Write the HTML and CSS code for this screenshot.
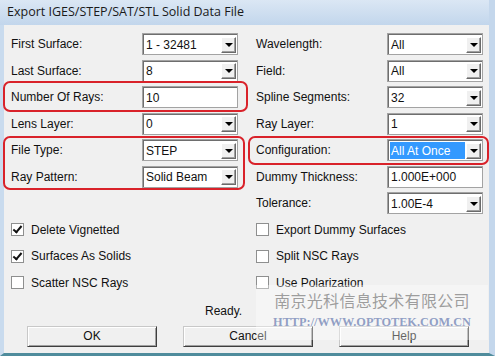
FILE: index.html
```html
<!DOCTYPE html>
<html lang="en">
<head>
    <meta charset="UTF-8">
    <title>Export IGES/STEP/SAT/STL Solid Data File</title>
    <link rel="stylesheet" href="styles.css">
</head>
<body>
    <div class="window">
        <div class="titlebar">Export IGES/STEP/SAT/STL Solid Data File</div>
        <div class="client">
            <div class="form">
                <label class="lbl">First Surface:</label>
                <div class="combo"><span class="val">1 - 32481</span><span class="drop"></span></div>
                <label class="lbl">Wavelength:</label>
                <div class="combo"><span class="val">All</span><span class="drop"></span></div>

                <label class="lbl">Last Surface:</label>
                <div class="combo"><span class="val">8</span><span class="drop"></span></div>
                <label class="lbl">Field:</label>
                <div class="combo"><span class="val">All</span><span class="drop"></span></div>

                <label class="lbl">Number Of Rays:</label>
                <div class="edit">10</div>
                <label class="lbl">Spline Segments:</label>
                <div class="combo"><span class="val">32</span><span class="drop"></span></div>

                <label class="lbl">Lens Layer:</label>
                <div class="combo"><span class="val">0</span><span class="drop"></span></div>
                <label class="lbl">Ray Layer:</label>
                <div class="combo"><span class="val">1</span><span class="drop"></span></div>

                <label class="lbl">File Type:</label>
                <div class="combo"><span class="val">STEP</span><span class="drop"></span></div>
                <label class="lbl">Configuration:</label>
                <div class="combo"><span class="val selected">All At Once</span><span class="drop"></span></div>

                <label class="lbl">Ray Pattern:</label>
                <div class="combo"><span class="val">Solid Beam</span><span class="drop"></span></div>
                <label class="lbl">Dummy Thickness:</label>
                <div class="edit">1.000E+000</div>

                <div class="blank"></div>
                <label class="lbl">Tolerance:</label>
                <div class="combo"><span class="val">1.00E-4</span><span class="drop"></span></div>

                <div class="check"><span class="box checked"></span>Delete Vignetted</div>
                <div class="check"><span class="box"></span>Export Dummy Surfaces</div>
                <div class="check"><span class="box checked"></span>Surfaces As Solids</div>
                <div class="check"><span class="box"></span>Split NSC Rays</div>
                <div class="check"><span class="box"></span>Scatter NSC Rays</div>
                <div class="check"><span class="box"></span>Use Polarization</div>
            </div>

            <div class="status">Ready.</div>

            <div class="buttons">
                <button>OK</button>
                <button>Cancel</button>
                <button>Help</button>
            </div>
        </div>

        <!-- red annotation frames -->
        <div class="mark mark-rays"></div>
        <div class="mark mark-type"></div>
        <div class="mark mark-config"></div>

        <div class="watermark">
            <div class="wm-cn">南京光科信息技术有限公司</div>
            <div class="wm-url">HTTP://WWW.OPTOTEK.COM.CN</div>
        </div>
    </div>
</body>
</html>
```

FILE: styles.css
```css
body {
    margin: 0;
    font-family: "Liberation Sans", Arial, sans-serif;
    font-size: 12px;
    color: #111;
}

.window {
    position: relative;
    width: 495px;
    height: 356px;
    box-sizing: border-box;
    background-color: #c9dbee;
    border-left: 4px solid #c9dbee;
    border-right: 6px solid #c4d7ec;
    border-bottom: 3px solid #4f8c9c;
    display: flex;
    flex-direction: column;
}

.titlebar {
    height: 25px;
    margin-left: -4px;
    padding-left: 7px;
    line-height: 24px;
    font-family: "Open Sans", "Liberation Sans", sans-serif;
    font-size: 12.5px;
    color: #1a1a1a;
    background: linear-gradient(#dbe7f4, #c2d6ec);
}

.client {
    flex: 1;
    background-color: #f0f0f0;
    padding: 8px 0 0 7px;
}

.form {
    display: grid;
    grid-template-columns: 131px 114px 131px 96px;
    grid-auto-rows: 22px;
    row-gap: 4.5px;
    align-items: center;
}

.lbl {
    white-space: nowrap;
}

.combo,
.edit {
    width: 96px;
    height: 22px;
    box-sizing: border-box;
    background-color: #fff;
    border: 1px solid #a3a3a3;
    box-shadow: inset 1px 1px 0 #6e6e6e;
    display: flex;
    align-items: center;
    padding: 2px 1px 1px 2px;
}

.edit {
    padding-left: 3px;
}

.val {
    flex: 1;
    padding-left: 1px;
    line-height: 16px;
    align-self: stretch;
    display: flex;
    align-items: center;
}

.val.selected {
    background-color: #3399ff;
    color: #fff;
    margin-right: 1px;
}

.drop {
    width: 15px;
    height: 16px;
    box-sizing: border-box;
    background-color: #f0f0f0;
    border: 1px solid;
    border-color: #fff #6a6a6a #6a6a6a #fff;
    box-shadow: inset -1px -1px 0 #a0a0a0;
    position: relative;
}

.drop::after {
    content: "";
    position: absolute;
    left: 3px;
    top: 5px;
    border-left: 4px solid transparent;
    border-right: 4px solid transparent;
    border-top: 4px solid #000;
}

.blank {
    grid-column: span 2;
}

.check {
    grid-column: span 2;
    display: flex;
    align-items: center;
    gap: 7px;
}

.box {
    width: 13px;
    height: 13px;
    box-sizing: border-box;
    background-color: #fff;
    border: 1px solid #8e8f8f;
    position: relative;
}

.box.checked::after {
    content: "";
    position: absolute;
    left: 3px;
    top: 0px;
    width: 3px;
    height: 7px;
    border: solid #111;
    border-width: 0 2px 2px 0;
    transform: rotate(40deg);
}

.status {
    margin-top: 10px;
    padding-left: 194px;
    height: 14px;
    line-height: 14px;
}

.buttons {
    display: flex;
    gap: 26px;
    margin-top: 8px;
    padding-left: 16px;
}

.buttons button {
    width: 130px;
    height: 21px;
    padding: 0;
    font-family: "Liberation Sans", Arial, sans-serif;
    font-size: 12px;
    color: #111;
    background-color: #f0f0f0;
    border: 1px solid;
    border-color: #c8c8c8 #3f3f3f #3f3f3f #c8c8c8;
    box-shadow: inset 1px 1px 0 #fff, inset -1px -1px 0 #a0a0a0;
}

.mark {
    position: absolute;
    border: 2px solid #d9222a;
    border-radius: 7px;
}

.mark-rays {
    left: -1px;
    top: 81px;
    width: 241px;
    height: 27px;
}

.mark-type {
    left: -1px;
    top: 136px;
    width: 238px;
    height: 50px;
}

.mark-config {
    left: 244px;
    top: 136px;
    width: 237px;
    height: 25px;
}

.watermark {
    position: absolute;
    left: 252px;
    top: 285px;
    width: 232px;
    height: 55px;
    background-color: rgba(255, 255, 255, 0.35);
    display: flex;
    flex-direction: column;
    align-items: center;
}

.wm-cn {
    margin-top: 4px;
    font-family: "Noto Sans CJK SC", sans-serif;
    font-size: 16px;
    letter-spacing: 0.3px;
    line-height: 22px;
    color: rgba(128, 128, 128, 0.75);
}

.wm-url {
    margin-top: 4px;
    font-family: "Liberation Serif", serif;
    font-weight: bold;
    font-size: 12.3px;
    color: rgba(100, 120, 175, 0.7);
}
```
